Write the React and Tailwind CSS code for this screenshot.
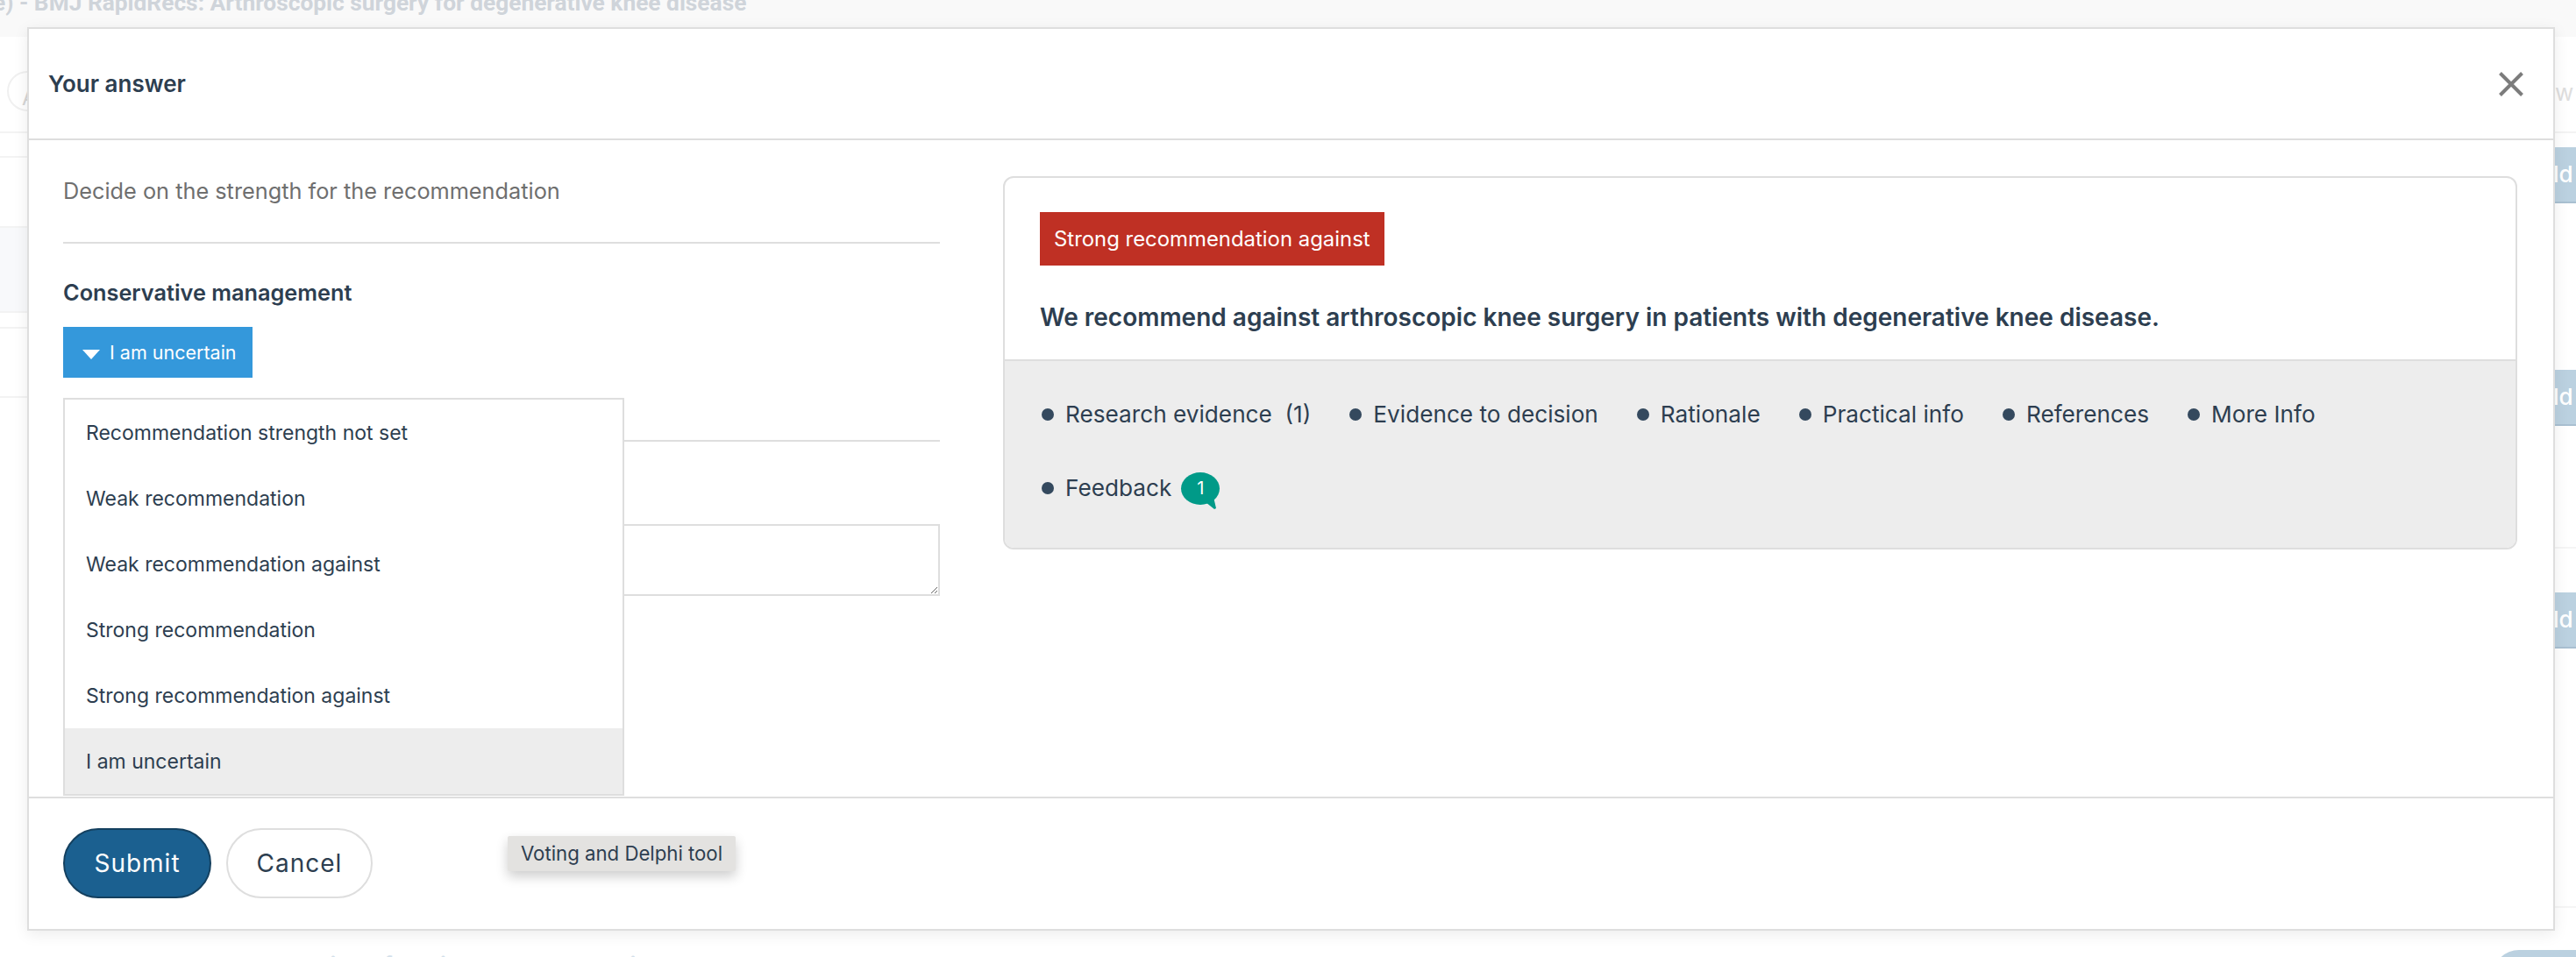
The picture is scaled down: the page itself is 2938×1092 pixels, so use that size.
import React from "react";

const items = [
  "Recommendation strength not set",
  "Weak recommendation",
  "Weak recommendation against",
  "Strong recommendation",
  "Strong recommendation against",
  "I am uncertain",
];
const links = ["Evidence to decision", "Rationale", "Practical info", "References", "More Info"];

function Link({ children }) {
  return (
    <div className="flex items-center h-[84px]">
      <span className="w-[14px] h-[14px] rounded-full bg-[#34495e] mr-[13px] shrink-0" />
      {children}
    </div>
  );
}

function SideButton({ className }) {
  return (
    <div className={`h-[64px] bg-[#bbd1e0] border-b-2 border-[#a9c0d1] text-white text-[26px] leading-[62px] font-medium ${className}`}>
      <span className="block -ml-[1px]">ld</span>
    </div>
  );
}

export default function App() {
  return (
    <div className="relative w-[2938px] h-[1092px] overflow-hidden bg-white text-[#2d3e50] font-['Inter',sans-serif]">
      <div className="h-[42px] bg-[#f9f9f9] overflow-hidden">
        <div className="-mt-[13px] -ml-[8px] font-['Roboto',sans-serif] font-bold text-[26.3px] leading-[32px] text-[#cfd4da] whitespace-nowrap">e) - BMJ RapidRecs: Arthroscopic surgery for degenerative knee disease</div>
      </div>

      <div className="flex justify-between">
        <div className="w-[31px]">
          <div className="h-[110px] border-b-2 border-[#f3f3f3] relative overflow-hidden">
            <div className="absolute left-[8px] top-[39px] w-[60px] h-[46px] rounded-full border-2 border-[#f0f0f0]" />
            <div className="absolute left-[25px] top-[55px] text-[24px] leading-[30px] text-[#d5d5d5]">A</div>
          </div>
          <div className="h-[28px] border-b-2 border-[#f3f3f3]" />
          <div className="h-[80px] border-b-2 border-[#f3f3f3]" />
          <div className="h-[97px] bg-[#f8f9fb] border-b-2 border-[#f3f3f3]" />
          <div className="h-[18px] border-b-2 border-[#f3f3f3]" />
          <div className="h-[79px] border-b-2 border-[#f3f3f3]" />
        </div>
        <div className="w-[25px]">
          <div className="h-[110px] border-b-2 border-[#f3f3f3] overflow-hidden pt-[48px] pl-[1px] text-[26px] leading-[32px] text-[#dedede]">w</div>
          <SideButton className="mt-[16px]" />
          <SideButton className="mt-[190px]" />
          <div className="h-[140px] border-b-2 border-[#f5f5f5]" />
          <SideButton className="mt-[50px]" />
          <div className="h-[296px] border-b-2 border-[#f5f5f5]" />
        </div>
      </div>

      <div className="absolute left-[2843px] top-[1084px] w-[130px] h-[60px] rounded-[30px] bg-[#bbd1e0]" />
      <div className="absolute left-[284px] top-[1086px] text-[26px] font-semibold leading-[32px] whitespace-nowrap text-[#d3e0ea]">Evaluation of Social Recommendation tool</div>

      <div className="absolute left-[31px] top-[31px] w-[2883px] h-[1031px] bg-white border-2 border-[#dedede] shadow-[0_4px_16px_rgba(0,0,0,0.08)] flex flex-col">
        <div className="h-[127px] shrink-0 border-b-2 border-[#dedede] flex items-center justify-between pl-[22px] pr-[34px]">
          <div className="text-[26px] font-semibold">Your answer</div>
          <svg width="28" height="28" viewBox="0 0 28 28" stroke="#7c7c7c" strokeWidth="4"><path d="M1.5 1.5 L26.5 26.5 M26.5 1.5 L1.5 26.5" /></svg>
        </div>
        <div className="flex-1 flex min-h-0">
          <div className="w-[1040px] shrink-0 pl-[39px] relative">
            <div className="w-[1000px] h-[118px] border-b-2 border-[#dedede] pt-[42px] text-[25.3px] leading-[32px] text-[#6f6f6f]">Decide on the strength for the recommendation</div>
            <div className="mt-[40px] text-[25.3px] font-semibold leading-[32px]">Conservative management</div>
            <div className="mt-[23px] w-[216px] h-[58px] bg-[#3498db] text-white text-[21.5px] flex items-center pl-[22px]">
              <span className="w-0 h-0 border-l-[10px] border-r-[10px] border-t-[11px] border-l-transparent border-r-transparent border-t-white mr-[11px] mt-[4px]" />
              I am uncertain
            </div>
            <div className="mt-[71px] w-[1000px] border-b-2 border-[#dedede]" />
            <textarea readOnly className="block mt-[94px] w-[1000px] h-[82px] border-2 border-[#dedede] outline-none bg-white" />
            <div className="absolute left-[39px] top-[294px] w-[640px] h-[454px] bg-white border-2 border-[#dedede] text-[23px] overflow-hidden">
              {items.map((t, i) => (
                <div key={t} className={`h-[75px] flex items-center pl-[24px] pt-[2px] ${i === 5 ? "bg-[#ededed]" : ""}`}>{t}</div>
              ))}
            </div>
          </div>
          <div className="w-[1727px] ml-[71px] mt-[41px] h-[426px] border-2 border-[#dedede] rounded-[12px] overflow-hidden flex flex-col">
            <div className="h-[209px] pl-[40px] pt-[39px] border-b-2 border-[#dedede]">
              <div className="inline-block h-[61px] leading-[61px] px-[16px] bg-[#bf3024] text-white text-[23.9px]">Strong recommendation against</div>
              <div className="mt-[41px] text-[28px] font-semibold leading-[36px]">We recommend against arthroscopic knee surgery in patients with degenerative knee disease.</div>
            </div>
            <div className="flex-1 bg-[#ededed] pl-[42px] pt-[19px] text-[26.2px]">
              <div className="flex gap-[44px]">
                <Link>Research evidence&nbsp; (1)</Link>
                {links.map((l) => <Link key={l}>{l}</Link>)}
              </div>
              <Link>
                Feedback
                <span className="relative ml-[11px] w-[44px] h-[37px] rounded-[50%] bg-[#009a88] text-white text-[20px] flex items-center justify-center">1
                  <svg className="absolute left-0 top-0 overflow-visible" width="44" height="37" viewBox="0 0 44 37"><path d="M28 34 L38 42 L40 41 L37 28 Z" fill="#009a88" /></svg>
                </span>
              </Link>
            </div>
          </div>
        </div>
        <div className="h-[151px] shrink-0 border-t-2 border-[#dedede] relative flex items-start pt-[34px] pl-[39px] gap-[17px]">
          <div className="w-[169px] h-[80px] rounded-[40px] bg-[#1b6090] border-2 border-[#14405f] text-white text-[28px] tracking-[1px] flex items-center justify-center">Submit</div>
          <div className="w-[167px] h-[80px] rounded-[40px] bg-white border-2 border-[#dedede] text-[28px] tracking-[1px] flex items-center justify-center">Cancel</div>
          <div className="absolute left-[546px] top-[43px] w-[260px] h-[40px] bg-[#e3e2e0] rounded-[2px] text-[22.2px] flex items-center justify-center shadow-[0_6px_14px_rgba(0,0,0,0.2)]">Voting and Delphi tool</div>
        </div>
      </div>
    </div>
  );
}
